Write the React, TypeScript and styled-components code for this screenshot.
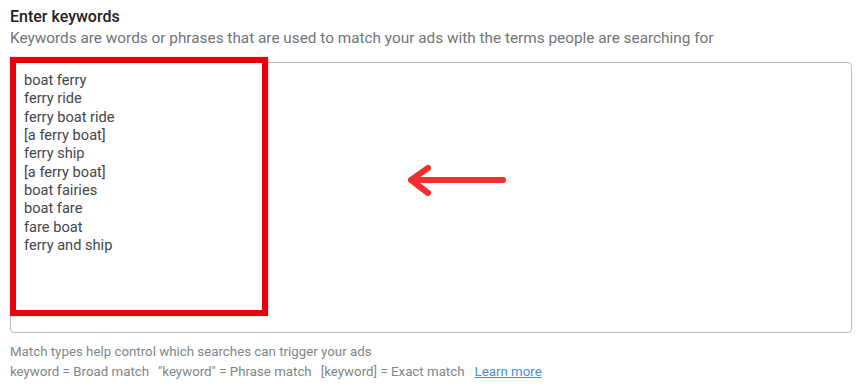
import * as React from 'react';
import styled, { createGlobalStyle } from 'styled-components';

const GlobalStyle = createGlobalStyle`
  body {
    margin: 0;
    background: #fff;
    font-family: Roboto, 'Liberation Sans', Arial, sans-serif;
  }
`;

const Page = styled.div`
  width: 860px;
  height: 390px;
  padding: 6px 8px 0 10px;
  box-sizing: border-box;
  overflow: hidden;
`;

const Title = styled.h2`
  margin: 0;
  font-size: 16px;
  font-weight: 500;
  line-height: 21px;
  color: #202124;
`;

const Subtitle = styled.p`
  margin: 1px 0 0 0;
  font-size: 15.35px;
  line-height: 20px;
  color: #70757a;
`;

const KeywordBox = styled.div`
  position: relative;
  margin-top: 14px;
  width: 842px;
  height: 271px;
  padding: 8px 13px;
  box-sizing: border-box;
  border: 1px solid #b8bbbf;
  border-radius: 4px;
`;

const KeywordLine = styled.div`
  font-size: 14.6px;
  line-height: 18.35px;
  color: #444649;
`;

const Highlight = styled.div`
  position: absolute;
  top: -6px;
  left: -1px;
  width: 258px;
  height: 259px;
  box-sizing: border-box;
  border: 6px solid #e8000b;
  box-shadow: 0 0 1px rgba(232, 0, 11, 0.5);
`;

const Pointer = styled.svg`
  position: absolute;
  top: 101px;
  left: 384px;
`;

const Help = styled.div`
  margin-top: 9px;
  font-size: 13.3px;
  line-height: 20px;
  color: #80868b;
`;

const HelpLine = styled.div`
  display: flex;
  gap: 9px;
  white-space: pre;
`;

const LearnMore = styled.a`
  color: #4a8fd0;
  text-decoration: underline;
  margin-left: 1px;
`;

const keywords = [
  'boat ferry',
  'ferry ride',
  'ferry boat ride',
  '[a ferry boat]',
  'ferry ship',
  '[a ferry boat]',
  'boat fairies',
  'boat fare',
  'fare boat',
  'ferry and ship'
];

const App: React.FunctionComponent = () => {
  return (
    <Page>
      <GlobalStyle />
      <Title>Enter keywords</Title>
      <Subtitle>
        Keywords are words or phrases that are used to match your ads with the terms people are
        searching for
      </Subtitle>
      <KeywordBox>
        {keywords.map((k, i) => (
          <KeywordLine key={i}>{k}</KeywordLine>
        ))}
        <Highlight />
        <Pointer width='112' height='34' viewBox='0 0 112 34'>
          <path
            d='M108 16 H16 M33 4 L16 16 L33 29'
            fill='none'
            stroke='#f03030'
            strokeWidth='6'
            strokeLinecap='round'
            strokeLinejoin='round'
          />
        </Pointer>
      </KeywordBox>
      <Help>
        <div>Match types help control which searches can trigger your ads</div>
        <HelpLine>
          <span>keyword = Broad match</span>
          <span>"keyword" = Phrase match</span>
          <span>[keyword] = Exact match</span>
          <LearnMore href='#'>Learn more</LearnMore>
        </HelpLine>
      </Help>
    </Page>
  );
};

export default App;
